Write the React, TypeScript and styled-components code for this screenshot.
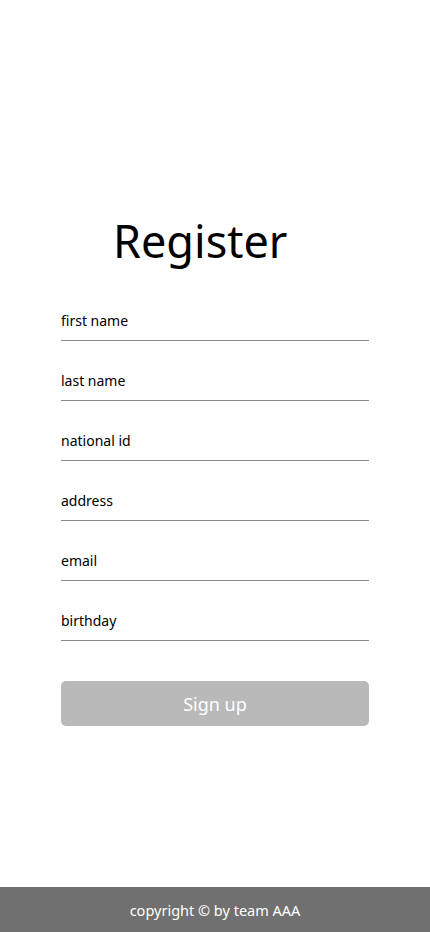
import styled, { createGlobalStyle } from "styled-components";

const GlobalStyle = createGlobalStyle`
  html, body {
    margin: 0;
    padding: 0;
    height: 100%;
  }
  body {
    font-family: "Noto Sans", "Open Sans", sans-serif;
    background: #ffffff;
  }
  #root {
    min-height: 100%;
  }
`;

const Page = styled.div`
  min-height: 932px;
  display: flex;
  flex-direction: column;
`;

const Main = styled.main`
  flex: 1;
  display: flex;
  flex-direction: column;
  padding: 209px 61px 0 61px;
`;

const Title = styled.h1`
  margin: 0 0 28px 0;
  padding-left: 52px;
  font-size: 45px;
  font-weight: 400;
  line-height: 64px;
  color: #000;
`;

const Form = styled.form`
  display: flex;
  flex-direction: column;
`;

const Field = styled.input`
  width: 100%;
  box-sizing: border-box;
  height: 40px;
  margin-bottom: 20px;
  padding: 0;
  border: none;
  border-bottom: 1px solid #8a8a8a;
  outline: none;
  font-family: inherit;
  font-size: 14px;
  color: #000;
  background: transparent;

  &::placeholder {
    color: #000;
  }
`;

const Submit = styled.button`
  margin-top: 20px;
  height: 45px;
  border: none;
  border-radius: 5px;
  background: #b9b9b9;
  color: #ffffff;
  font-family: inherit;
  font-size: 18px;
  cursor: pointer;
`;

const Footer = styled.footer`
  height: 45px;
  background: #707070;
  color: #ffffff;
  display: flex;
  align-items: center;
  justify-content: center;
  font-size: 14.5px;
`;

const fields = ["first name", "last name", "national id", "address", "email", "birthday"];

function App() {
  return (
    <Page>
      <GlobalStyle />
      <Main>
        <Title>Register</Title>
        <Form onSubmit={(e) => e.preventDefault()}>
          {fields.map((f) => (
            <Field key={f} placeholder={f} />
          ))}
          <Submit type="submit">Sign up</Submit>
        </Form>
      </Main>
      <Footer>copyright © by team AAA</Footer>
    </Page>
  );
}

export default App;
